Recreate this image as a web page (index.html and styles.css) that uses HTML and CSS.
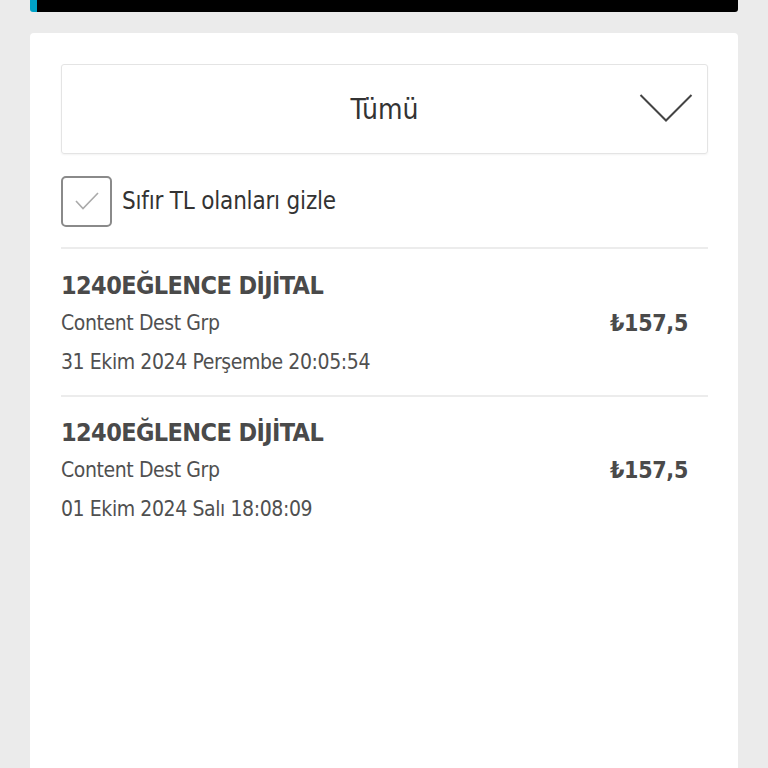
FILE: index.html
```html
<!DOCTYPE html>
<html lang="tr">
<head>
<meta charset="utf-8">
<link rel="stylesheet" href="styles.css">
</head>
<body>
<div class="page">
  <div class="topbar"></div>
  <div class="card">
    <div class="select">
      <span class="select-text">Tümü</span>
      <svg class="chev" width="54" height="30" viewBox="0 0 54 30"><path d="M1.5 2 L27 27.5 L52.5 2" fill="none" stroke="#444" stroke-width="2"/></svg>
    </div>
    <label class="check-row">
      <span class="checkbox"><svg width="26" height="22" viewBox="0 0 26 22"><path d="M2 11 L9 18.5 L24 3" fill="none" stroke="#aaa" stroke-width="1.6"/></svg></span>
      <span class="check-label">Sıfır TL olanları gizle</span>
    </label>
    <div class="list">
      <div class="item">
        <div class="info">
          <div class="title">1240EĞLENCE DİJİTAL</div>
          <div class="sub">Content Dest Grp</div>
          <div class="date">31 Ekim 2024 Perşembe 20:05:54</div>
        </div>
        <div class="price">₺157,5</div>
      </div>
      <div class="item">
        <div class="info">
          <div class="title">1240EĞLENCE DİJİTAL</div>
          <div class="sub">Content Dest Grp</div>
          <div class="date">01 Ekim 2024 Salı 18:08:09</div>
        </div>
        <div class="price">₺157,5</div>
      </div>
    </div>
  </div>
</div>
</body>
</html>
```
FILE: styles.css
```css
html, body {
  margin: 0;
  padding: 0;
  background: #ebebeb;
  height: 768px;
  overflow: hidden;
}
body {
  font-family: "DejaVu Sans Condensed", Roboto, sans-serif;
  color: #4a4a4a;
}
.page {
  padding: 0 30px;
}
.topbar {
  height: 12px;
  background: #000;
  border-left: 7px solid #00a2c7;
  border-radius: 0 0 3px 3px;
}
.card {
  margin-top: 21px;
  background: #fff;
  border-radius: 4px;
  padding: 31px 30px 0 31px;
  height: 740px;
}
.select {
  height: 88px;
  border: 1px solid #e4e4e4;
  border-radius: 3px;
  box-shadow: 0 1px 2px rgba(0,0,0,0.05);
  display: flex;
  align-items: center;
  justify-content: center;
  position: relative;
}
.select-text {
  font-size: 28px;
  color: #333;
}
.chev {
  position: absolute;
  right: 14px;
  top: 28px;
}
.check-row {
  display: flex;
  align-items: center;
  gap: 10px;
  margin-top: 21px;
  height: 52px;
}
.checkbox {
  width: 47px;
  height: 47px;
  border: 2px solid #8a8a8a;
  border-radius: 5px;
  display: flex;
  align-items: center;
  justify-content: center;
}
.check-label {
  font-size: 24px;
  letter-spacing: -0.2px;
  color: #333;
}
.list {
  margin-top: 20px;
}
.item {
  border-top: 2px solid #ececec;
  display: flex;
  align-items: center;
  padding: 18px 20px 13px 0;
}
.item + .item {
  padding-top: 17px;
}
.info {
  flex: 1;
}
.title {
  font-weight: bold;
  font-size: 25px;
  letter-spacing: -0.6px;
  line-height: 37px;
}
.sub, .date {
  font-size: 21px;
  letter-spacing: -0.4px;
  line-height: 38px;
  color: #505050;
}
.date {
  line-height: 40px;
}
.price {
  font-weight: bold;
  font-size: 23px;
  letter-spacing: -0.3px;
  margin-bottom: 4px;
}
```
